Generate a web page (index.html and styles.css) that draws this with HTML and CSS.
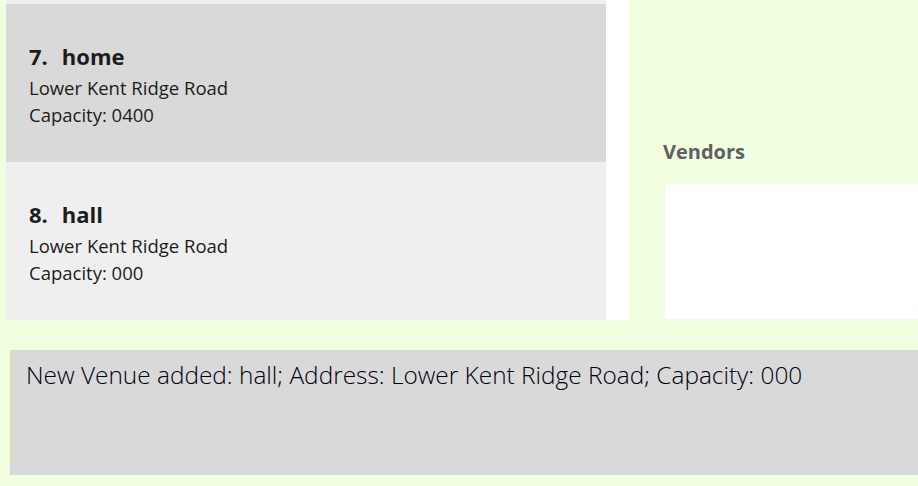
FILE: index.html
```html
<!DOCTYPE html>
<html>
<head>
<meta charset="utf-8">
<link rel="stylesheet" href="styles.css">
</head>
<body>
<div class="app">
  <div class="top">
    <div class="list-pane">
      <div class="list">
        <div class="list-top"></div>
        <div class="card card-dark">
          <div class="title"><span class="idx">7.</span><span class="name">home</span></div>
          <div class="line first">Lower Kent Ridge Road</div>
          <div class="line">Capacity: 0400</div>
        </div>
        <div class="card card-light">
          <div class="title"><span class="idx">8.</span><span class="name">hall</span></div>
          <div class="line first">Lower Kent Ridge Road</div>
          <div class="line">Capacity: 000</div>
        </div>
      </div>
      <div class="scroll"></div>
    </div>
    <div class="side">
      <div class="side-head">Vendors</div>
      <div class="side-box"></div>
    </div>
  </div>
  <div class="result">New Venue added: hall; Address: Lower Kent Ridge Road; Capacity: 000</div>
</div>
</body>
</html>
```
FILE: styles.css
```css
html, body {
  margin: 0;
  padding: 0;
  background: #f1ffe0;
}
.app {
  width: 918px;
  height: 486px;
  overflow: hidden;
  display: flex;
  flex-direction: column;
  font-family: "Open Sans", "Noto Sans", sans-serif;
}
.top {
  display: flex;
  height: 320px;
  padding-left: 6px;
}
.list-pane {
  display: flex;
  width: 623px;
  background: #ffffff;
}
.list {
  width: 600px;
  display: flex;
  flex-direction: column;
}
.list-top {
  height: 4px;
  background: #efefef;
}
.card {
  height: 158px;
  box-sizing: border-box;
  padding: 37px 0 0 23px;
  display: flex;
  flex-direction: column;
  color: #1c1c1c;
}
.card-dark { background: #d9d9d9; }
.card-light { background: #efefef; }
.title {
  font-size: 22px;
  font-weight: 700;
  line-height: 31px;
  display: flex;
  gap: 14px;
}
.line {
  font-size: 18.5px;
  line-height: 27px;
}
.line.first {
  margin-top: 2px;
}
.scroll {
  width: 23px;
}
.side {
  flex: 1;
  display: flex;
  flex-direction: column;
  padding-top: 134px;
}
.side-head {
  font-size: 20px;
  font-weight: 700;
  color: #5e625e;
  padding-left: 34px;
  line-height: 36px;
}
.side-box {
  margin-top: 14px;
  margin-left: 36px;
  height: 135px;
  background: #ffffff;
}
.result {
  margin: 30px 0 0 10px;
  height: 125px;
  background: #d9d9d9;
  box-sizing: border-box;
  padding: 8px 16px;
  font-size: 24.4px;
  font-weight: 300;
  color: #000010;
  line-height: 34px;
}
```
